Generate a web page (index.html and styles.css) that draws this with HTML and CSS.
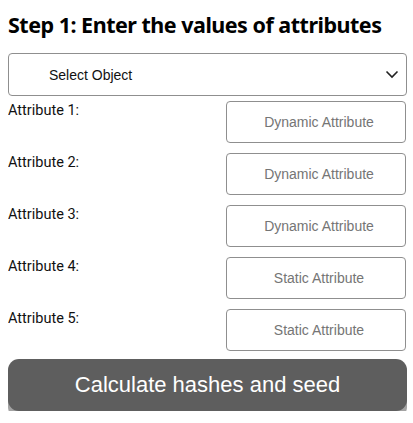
FILE: index.html
```html
<!DOCTYPE html>
<html>
<head>
<meta charset="utf-8">
<link rel="stylesheet" href="styles.css">
</head>
<body>
<h1 class="title">Step 1: Enter the values of attributes</h1>
<div class="select">
  <span class="select-text">Select Object</span>
  <svg class="chev" width="14" height="9" viewBox="0 0 14 9"><path d="M1.5 1.5 L7 7 L12.5 1.5" fill="none" stroke="#222" stroke-width="1.6"/></svg>
</div>
<div class="rows">
  <div class="row"><span class="label">Attribute 1:</span><input class="field" placeholder="Dynamic Attribute"></div>
  <div class="row"><span class="label">Attribute 2:</span><input class="field" placeholder="Dynamic Attribute"></div>
  <div class="row"><span class="label">Attribute 3:</span><input class="field" placeholder="Dynamic Attribute"></div>
  <div class="row"><span class="label">Attribute 4:</span><input class="field" placeholder="Static Attribute"></div>
  <div class="row"><span class="label">Attribute 5:</span><input class="field" placeholder="Static Attribute"></div>
</div>
<button class="btn">Calculate hashes and seed</button>
</body>
</html>
```
FILE: styles.css
```css
html, body { background: #fff; }
body {
  margin: 8px 6px 8px 8px;
  font-family: "Liberation Sans", Arial, sans-serif;
}
.title {
  font-family: "Noto Sans", "Open Sans", sans-serif;
  font-weight: 700;
  font-size: 21.5px;
  letter-spacing: -0.5px;
  line-height: 30px;
  margin: 2px 0 13px 0;
  color: #000;
}
.select {
  box-sizing: border-box;
  height: 43px;
  border: 1px solid #8f8f8f;
  border-radius: 4px;
  display: flex;
  align-items: center;
  justify-content: space-between;
  padding: 0 7px 0 40px;
}
.select-text {
  font-size: 14px;
  color: #111;
}
.rows {
  display: flex;
  flex-direction: column;
  gap: 10px;
  margin-top: 5px;
}
.row {
  display: flex;
  justify-content: space-between;
  align-items: flex-start;
}
.label {
  font-family: Roboto, "Liberation Sans", sans-serif;
  font-size: 14.5px;
  color: #111;
  margin-top: 1px;
}
.field {
  box-sizing: border-box;
  width: 180px;
  height: 42px;
  margin: 0 1px 0 0;
  border: 1px solid #8f8f8f;
  border-radius: 4px;
  text-align: center;
  font-family: "Liberation Sans", Arial, sans-serif;
  font-size: 14px;
  padding: 0 0 0 6px;
  outline: none;
}
.field::placeholder { color: #757575; }
.btn {
  display: block;
  box-sizing: border-box;
  width: 100%;
  height: 52px;
  margin-top: 8px;
  border: none;
  border-radius: 11px;
  background: #5e5e5e;
  color: #fff;
  font-family: "Liberation Sans", Arial, sans-serif;
  font-size: 22px;
  box-shadow: 0 7px 0 #a3a3a3;
}
```
